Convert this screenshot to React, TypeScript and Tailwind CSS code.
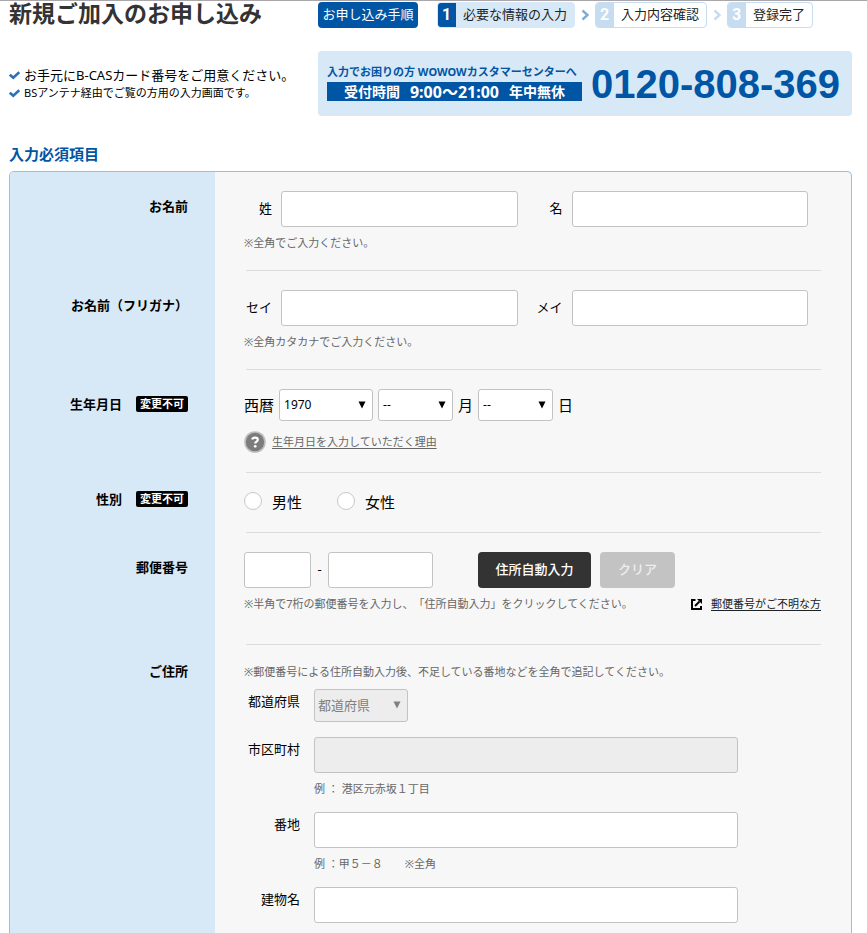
import { ReactNode } from "react";

export default function App() {
  return (
    <main className="border-t border-[#aaa6a9] bg-white px-[9px] font-['Noto_Sans','Noto_Sans_CJK_JP',sans-serif] text-[13px] text-black [text-spacing-trim:space-all]">
      <header className="mr-[6px] flex">
        <div className="w-[309px] shrink-0">
          <h1 className="font-['Liberation_Sans','Noto_Sans_CJK_JP',sans-serif] text-[23px] leading-[27px] font-bold whitespace-nowrap text-[#333]">新規ご加入のお申し込み</h1>
          <ul className="mt-[38px] leading-[18px] whitespace-nowrap">
            <li className="flex items-center gap-1">
              <CheckMark />
              お手元にB-CASカード番号をご用意ください。
            </li>
            <li className="flex items-center gap-1 text-[11px]">
              <CheckMark />
              BSアンテナ経由でご覧の方用の入力画面です。
            </li>
          </ul>
        </div>
        <div className="grow pt-px">
          <div className="flex h-[26px] items-center whitespace-nowrap">
            <p className="flex h-full w-[100px] items-center justify-center rounded-sm bg-[#0055a5] text-white">お申し込み手順</p>
            <ol className="ml-[19px] flex h-full items-center gap-[6px]">
              <Step no={1} name="必要な情報の入力" active />
              <Arrow className="text-[#7fabd6]" />
              <Step no={2} name="入力内容確認" />
              <Arrow className="text-[#c5dcf1]" />
              <Step no={3} name="登録完了" />
            </ol>
          </div>
          <div className="mt-[23px] flex h-[65px] items-center gap-[9px] rounded-sm bg-[#d7e8f6] px-[9px] font-bold whitespace-nowrap text-[#0055a5]">
            <div className="w-[255px] shrink-0 pb-1">
              <p className="text-[11px] leading-5">入力でお困りの方 WOWOWカスタマーセンターへ</p>
              <p className="flex h-[19px] items-center justify-center gap-[10px] bg-[#0055a5] text-sm text-white">
                <span>受付時間</span>
                <span className="text-base">9:00〜21:00</span>
                <span>年中無休</span>
              </p>
            </div>
            <p className="font-['Liberation_Sans',sans-serif] text-[40px] leading-10">0120-808-369</p>
          </div>
        </div>
      </header>

      <h2 className="mt-7 mb-[7px] text-[15px] leading-5 font-bold text-[#0055a5]">入力必須項目</h2>

      <form className="mr-[6px] overflow-hidden rounded-t-[5px] border border-b-0 border-[#9dbfd8] bg-[#f7f7f7]">
        <Row title="お名前">
          <NamePair first="姓" second="名" id="name" />
          <Note>※全角でご入力ください。</Note>
        </Row>

        <Row title="お名前（フリガナ）">
          <NamePair first="セイ" second="メイ" id="kana" />
          <Note>※全角カタカナでご入力ください。</Note>
        </Row>

        <Row title="生年月日" locked>
          <div className="flex h-8 items-center gap-[5px] text-[15px]">
            <label htmlFor="year">西暦</label>
            <Select id="year" className="w-[94px]" options={["1970", "1971", "1972"]} />
            <Select id="month" className="w-[75px]" options={["--", "1", "2", "3"]} />
            <label htmlFor="month">月</label>
            <Select id="day" className="w-[75px]" options={["--", "1", "2", "3"]} />
            <label htmlFor="day">日</label>
          </div>
          <div className="mt-[10px] flex h-[22px] items-center gap-[6px]">
            <HelpIcon />
            <a href="#reason" className="text-[11px] text-[#666] underline underline-offset-2">生年月日を入力していただく理由</a>
          </div>
        </Row>

        <Row title="性別" locked compact>
          <div className="flex h-[21px] gap-[35px] text-[15px] leading-[21px]">
            <Radio id="male" name="男性" />
            <Radio id="female" name="女性" />
          </div>
        </Row>

        <Row title="郵便番号" bottom="h-8">
          <div className="flex items-center">
            <input id="zip1" aria-label="郵便番号 上3桁" className={inputStyle + " w-[67px]"} />
            <span className="w-[17px] text-center">-</span>
            <input id="zip2" aria-label="郵便番号 下4桁" className={inputStyle + " w-[105px]"} />
            <button type="button" className="ml-[45px] h-9 w-[113px] rounded-sm bg-[#333] font-medium text-white">住所自動入力</button>
            <button type="button" className="ml-[9px] h-9 w-[75px] rounded-sm bg-[#c3c3c3] font-medium text-[#eee]">クリア</button>
          </div>
          <div className="flex items-end justify-between whitespace-nowrap">
            <Note>※半角で7桁の郵便番号を入力し、「住所自動入力」をクリックしてください。</Note>
            <a href="#zip" className="flex items-center gap-[9px] text-[11px] leading-4 text-[#222] underline underline-offset-2">
              <WindowIcon />
              郵便番号がご不明な方
            </a>
          </div>
        </Row>

        <Row title="ご住所" compact last>
          <p className="text-[11px] leading-4 text-[#666]">※郵便番号による住所自動入力後、不足している番地などを全角で追記してください。</p>
          <div className="mt-[9px] flex flex-col">
            <Address id="pref" name="都道府県">
              <Select id="pref" className="w-[94px]" options={["都道府県"]} disabled />
            </Address>
            <Address id="city" name="市区町村">
              <input id="city" disabled className={inputStyle + " w-full bg-[#ededed]"} />
              <Note>例 ： 港区元赤坂１丁目</Note>
            </Address>
            <Address id="street" name="番地">
              <input id="street" className={inputStyle + " w-full"} />
              <Note>例 ：甲５－８　　※全角</Note>
            </Address>
            <Address id="building" name="建物名">
              <input id="building" className={inputStyle + " w-full"} />
            </Address>
          </div>
        </Row>
      </form>
    </main>
  );
}

const inputStyle = "h-9 rounded-[3px] border border-[#c3c3c3] px-2 not-disabled:bg-white";

function Row({ title, children, locked, compact, last, bottom = "h-[19px]" }: RowProps) {
  return (
    <section className="flex">
      <h3 className={"flex w-[205px] shrink-0 justify-end gap-[14px] bg-[#d7e8f6] pr-[27px] leading-5 font-bold " + (compact ? "pt-4" : "pt-6")}>
        {title}
        {locked && <span className="mt-[2px] h-4 w-[52px] rounded-xs bg-black text-center text-[11px] leading-4 text-white">変更不可</span>}
      </h3>
      <div className={"grow pt-[19px] pl-[29px] pr-[30px] " + (last ? "pb-[10px]" : "")}>
        {children}
        {!last && (
          <>
            <div className={bottom} />
            <hr className="ml-0.5 border-[#dcdcdc]" />
          </>
        )}
      </div>
    </section>
  );
}

function NamePair({ first, second, id }: { first: string; second: string; id: string }) {
  return (
    <div className="flex items-center pr-[13px]">
      <label htmlFor={id + "1"} className="w-7 text-right">{first}</label>
      <input id={id + "1"} className={inputStyle + " ml-[9px] min-w-0 flex-1"} />
      <label htmlFor={id + "2"} className="ml-[17px] w-7 text-right">{second}</label>
      <input id={id + "2"} className={inputStyle + " ml-[9px] min-w-0 flex-1"} />
    </div>
  );
}

function Note({ children }: { children: ReactNode }) {
  return <p className="mt-2 text-[11px] leading-4 text-[#666]">{children}</p>;
}

function Address({ id, name, children }: { id: string; name: string; children: ReactNode }) {
  return (
    <div className="mb-[15px] flex gap-[14px] last:mb-0">
      <label htmlFor={id} className="mt-0.5 w-14 shrink-0 text-right leading-5">{name}</label>
      <div className="max-w-[424px] grow">{children}</div>
    </div>
  );
}

function Select({ id, options, className, disabled }: { id: string; options: string[]; className: string; disabled?: boolean }) {
  return (
    <div className={"relative " + className}>
      <select
        id={id}
        disabled={disabled}
        className="block h-8 w-full appearance-none rounded-[3px] border border-[#c3c3c3] bg-white pl-1 text-xs disabled:h-[33px] disabled:bg-[#ededed] disabled:pl-[3px] disabled:text-[13px] disabled:text-[#808080]">
        {options.map((item) => (
          <option key={item}>{item}</option>
        ))}
      </select>
      <svg className={"pointer-events-none absolute top-3 right-[7px] h-2 w-2 " + (disabled ? "text-[#808080]" : "text-black")} viewBox="0 0 8 8">
        <path d="M0.5 0.5h7L4 7.5z" fill="currentColor" />
      </svg>
    </div>
  );
}

function Radio({ id, name }: { id: string; name: string }) {
  return (
    <label htmlFor={id} className="flex items-start gap-[10px]">
      <input type="radio" id={id} name="gender" className="h-[18px] w-[18px] appearance-none rounded-full border border-[#c8c8c8] bg-white checked:border-[5px] checked:border-[#0055a5]" />
      {name}
    </label>
  );
}

function Step({ no, name, active }: { no: number; name: string; active?: boolean }) {
  return (
    <li className={"flex h-[26px] items-center overflow-hidden rounded-sm border " + (active ? "border-[#d7e8f6] bg-[#d7e8f6]" : "border-[#c5dcf1] bg-white")}>
      <span className={"-my-px -ml-px flex h-[26px] w-[19px] items-center justify-center font-['Roboto',sans-serif] text-base font-bold text-white " + (active ? "bg-[#0055a5]" : "bg-[#c5dcf1]")}>{no}</span>
      <span className="px-[7px] text-[#222]">{name}</span>
    </li>
  );
}

function Arrow({ className }: { className: string }) {
  return (
    <svg className={"h-3 w-2 " + className} viewBox="0 0 8 12" fill="none" stroke="currentColor" strokeWidth="2.4">
      <path d="M1.5 1.5L6.5 6l-5 4.5" />
    </svg>
  );
}

function CheckMark() {
  return (
    <svg className="h-[10px] w-[11px] shrink-0" viewBox="0 0 11 10" fill="none" stroke="#2a71b5" strokeWidth="2.6">
      <path d="M0.8 4.600L4.300 7.800L10.300 2.200" />
    </svg>
  );
}

function HelpIcon() {
  return (
    <svg className="h-[22px] w-[22px]" viewBox="0 0 22 22" fill="none">
      <circle cx="11" cy="11" r="10.8" fill="#bdbdbd" />
      <circle cx="11" cy="11" r="9.2" fill="#7c7c7c" />
      <path d="M8.200 8.600c.3-1.400 1.400-2 2.800-2 1.700 0 2.800.8 2.800 2.200 0 1.800-2.600 1.900-2.600 3.800" stroke="#fff" strokeWidth="2.200" />
      <circle cx="11.200" cy="15.300" r="1.400" fill="#fff" />
    </svg>
  );
}

function WindowIcon() {
  return (
    <svg className="h-[11px] w-[11px]" viewBox="0 0 11 11" fill="none" stroke="#000" strokeWidth="2">
      <path d="M4.500 1H1v9h9V7" />
      <path d="M4 7L8.500 2.500" />
      <path d="M6 0h5v5z" fill="#000" stroke="none" />
    </svg>
  );
}

type RowProps = {
  title: string;
  children: ReactNode;
  locked?: boolean;
  compact?: boolean;
  last?: boolean;
  bottom?: string;
}
